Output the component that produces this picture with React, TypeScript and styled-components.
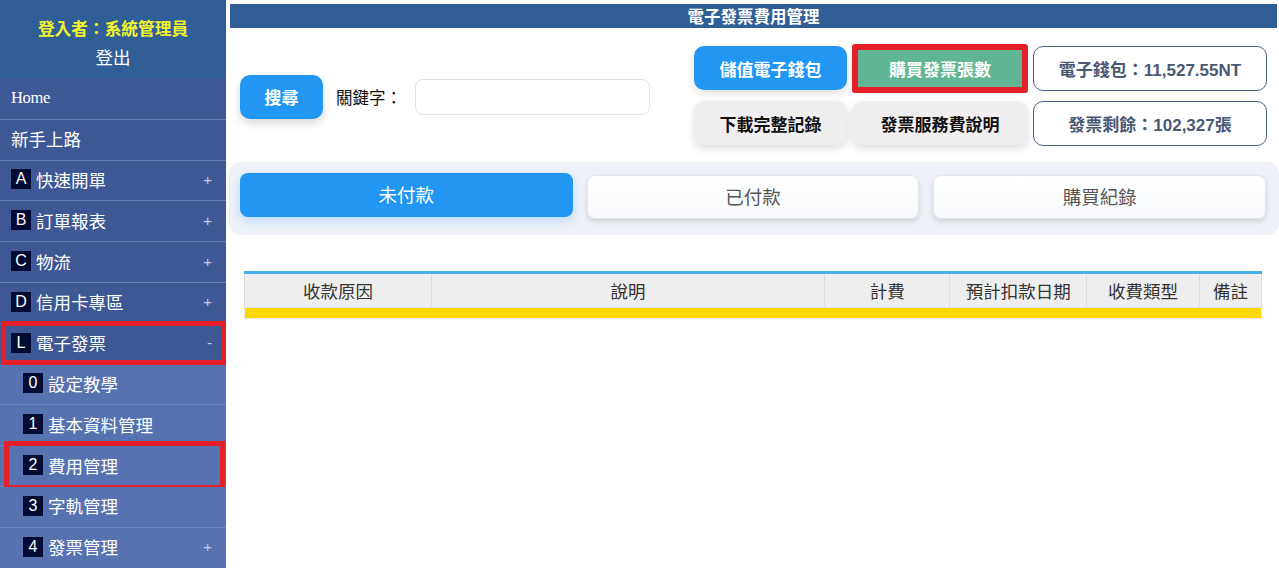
import React from "react";
import styled, { createGlobalStyle, css } from "styled-components";

const GlobalStyle = createGlobalStyle`
  html, body { margin: 0; padding: 0; background: #ffffff; }
  body { font-family: "Noto Sans CJK TC", "Noto Sans", sans-serif; overflow: hidden; }
  * { box-sizing: border-box; }
`;

const Page = styled.div`
  display: flex;
  width: 1279px;
  height: 568px;
  overflow: hidden;
`;

const Sidebar = styled.aside`
  width: 226px;
  flex: 0 0 226px;
  height: 568px;
  background: #3d5894;
  display: flex;
  flex-direction: column;
  font-family: "Liberation Serif", "Noto Sans CJK TC", serif;
  color: #ffffff;
  overflow: hidden;
`;

const UserBox = styled.div`
  height: 79px;
  flex: 0 0 79px;
  background: #305e97;
  display: flex;
  flex-direction: column;
  align-items: center;
  justify-content: center;
  gap: 10px;
  padding-top: 7px;
`;

const UserName = styled.div`
  color: #f2f52a;
  font-size: 16.7px;
  font-weight: bold;
  font-family: "Noto Sans CJK TC", sans-serif;
  line-height: 20px;
`;

const Logout = styled.div`
  color: #ffffff;
  font-size: 17.5px;
  line-height: 20px;
`;

const MenuItem = styled.div<{ $sub?: boolean; $marked?: boolean }>`
  position: relative;
  height: 40.8px;
  flex: 0 0 40.8px;
  display: flex;
  align-items: center;
  padding-left: ${(p) => (p.$sub ? "23px" : "11px")};
  padding-right: 14px;
  padding-bottom: 2px;
  font-size: 17.5px;
  background: ${(p) => (p.$sub ? "#5672b0" : "#3d5894")};
  border-bottom: 1px solid ${(p) => (p.$sub ? "#6c86c0" : "#6b7fb6")};
  ${(p) =>
    p.$marked &&
    css`
      &::after {
        content: "";
        position: absolute;
        left: ${p.$sub ? "4px" : "1px"};
        right: ${p.$sub ? "1px" : "-1px"};
        top: ${p.$sub ? "-5px" : "-3px"};
        bottom: ${p.$sub ? "-4px" : "-1px"};
        border: 5px solid #e51f27;
        pointer-events: none;
      }
    `}
`;

const Badge = styled.span`
  display: inline-flex;
  align-items: center;
  justify-content: center;
  width: 20px;
  height: 20px;
  margin-right: 5px;
  background: #020b33;
  color: #ffffff;
  font-family: "Liberation Sans", sans-serif;
  font-size: 16px;
`;

const MenuLabel = styled.span<{ $latin?: boolean }>`
  flex: 1;
  ${(p) =>
    p.$latin &&
    css`
      font-size: 16.5px;
      letter-spacing: -0.3px;
    `}
`;

const Toggle = styled.span`
  color: #c3cbe0;
  font-family: "Liberation Sans", sans-serif;
  font-size: 15px;
`;

const Main = styled.main`
  flex: 1;
  margin-left: 4px;
  padding-top: 4px;
  display: flex;
  flex-direction: column;
  min-width: 0;
`;

const TitleBar = styled.div`
  height: 24px;
  margin-right: 2px;
  background: #305e97;
  color: #ffffff;
  font-size: 16.5px;
  font-weight: bold;
  line-height: 24px;
  text-align: center;
`;

const Toolbar = styled.div`
  display: flex;
  align-items: center;
  justify-content: space-between;
  padding: 18px 12px 17px 10px;
`;

const SearchGroup = styled.div`
  display: flex;
  align-items: center;
  margin-top: 2px;
`;

const SearchButton = styled.button`
  width: 83px;
  height: 44px;
  border: none;
  border-radius: 10px;
  background: #2196f3;
  color: #ffffff;
  font-family: inherit;
  font-size: 17px;
  font-weight: bold;
  box-shadow: 0 4px 8px rgba(0, 0, 0, 0.16);
`;

const KeywordLabel = styled.label`
  margin-left: 13px;
  font-size: 16.5px;
  color: #111111;
  width: 79px;
`;

const KeywordInput = styled.input`
  width: 235px;
  height: 36px;
  border: 1px solid #e2e2e2;
  border-radius: 8px;
  background: #ffffff;
  outline: none;
`;

const ActionGrid = styled.div`
  display: grid;
  grid-template-columns: 153px 176px 234px;
  grid-template-rows: 44px 44px;
  column-gap: 5px;
  row-gap: 11px;
  align-items: center;
`;

const ActionButton = styled.button<{ $tone: "blue" | "green" | "gray" }>`
  height: 44px;
  border: none;
  border-radius: 10px;
  font-family: inherit;
  font-size: 17px;
  font-weight: bold;
  box-shadow: 0 4px 8px rgba(0, 0, 0, 0.12);
  ${(p) =>
    p.$tone === "blue" &&
    css`
      background: #2196f3;
      color: #ffffff;
    `}
  ${(p) =>
    p.$tone === "gray" &&
    css`
      background: #f0eeee;
      color: #111111;
    `}
  ${(p) =>
    p.$tone === "green" &&
    css`
      height: 49px;
      background: #5fb594;
      color: #ffffff;
      border: 6px solid #e51f27;
      border-radius: 3px;
      box-shadow: none;
    `}
`;

const InfoBox = styled.div`
  height: 45px;
  border: 1px solid #4c6286;
  border-radius: 10px;
  display: flex;
  align-items: center;
  justify-content: center;
  color: #4a5874;
  font-family: "Liberation Sans", "Noto Sans CJK TC", sans-serif;
  font-size: 17px;
  font-weight: bold;
`;

const TabBar = styled.div`
  display: grid;
  grid-template-columns: repeat(3, 1fr);
  gap: 14px;
  align-items: start;
  padding: 11px 13px 16px 11px;
  margin-left: -1px;
  background: #eef2f8;
  border-radius: 12px;
`;

const Tab = styled.div<{ $active?: boolean }>`
  height: 44px;
  display: flex;
  align-items: center;
  justify-content: center;
  border-radius: 8px;
  font-size: 18.5px;
  padding-bottom: 2px;
  ${(p) =>
    p.$active
      ? css`
          background: #2196f3;
          color: #ffffff;
          box-shadow: 0 4px 10px rgba(33, 150, 243, 0.25);
        `
      : css`
          margin-top: 2px;
          background: linear-gradient(#ffffff, #f7f9fc);
          color: #555555;
          border: 1px solid #e3e6eb;
          box-shadow: 0 3px 5px rgba(0, 0, 0, 0.12);
        `}
`;

const Table = styled.table`
  margin: 36px 0 0 14px;
  width: 1018px;
  border-collapse: collapse;
  border-top: 3px solid #4aaee6;
  font-size: 17.5px;
  color: #333333;
`;

const Th = styled.th<{ $w: number }>`
  width: ${(p) => p.$w}px;
  height: 35px;
  padding: 0;
  background: #eeeeee;
  font-weight: normal;
  text-align: center;
  border-left: 1px solid #dcdcdc;
  border-right: 1px solid #dcdcdc;
  border-bottom: 1px solid #e0e0e0;
`;

const FillRow = styled.td`
  height: 11px;
  padding: 0;
  background: #ffd700;
  border: 1px solid #e6e6e6;
  border-top: none;
`;

const menu: { badge?: string; label: string; toggle?: string; sub?: boolean; marked?: boolean }[] = [
  { label: "Home" },
  { label: "新手上路" },
  { badge: "A", label: "快速開單", toggle: "+" },
  { badge: "B", label: "訂單報表", toggle: "+" },
  { badge: "C", label: "物流", toggle: "+" },
  { badge: "D", label: "信用卡專區", toggle: "+" },
  { badge: "L", label: "電子發票", toggle: "-", marked: true },
  { badge: "0", label: "設定教學", sub: true },
  { badge: "1", label: "基本資料管理", sub: true },
  { badge: "2", label: "費用管理", sub: true, marked: true },
  { badge: "3", label: "字軌管理", sub: true },
  { badge: "4", label: "發票管理", sub: true, toggle: "+" },
];

const columns: [string, number][] = [
  ["收款原因", 187],
  ["說明", 394],
  ["計費", 125],
  ["預計扣款日期", 137],
  ["收費類型", 113],
  ["備註", 62],
];

export default function App() {
  return (
    <>
      <GlobalStyle />
      <Page>
        <Sidebar>
          <UserBox>
            <UserName>登入者：系統管理員</UserName>
            <Logout>登出</Logout>
          </UserBox>
          {menu.map((m) => (
            <MenuItem key={m.label} $sub={m.sub} $marked={m.marked}>
              {m.badge && <Badge>{m.badge}</Badge>}
              <MenuLabel $latin={m.label === "Home"}>{m.label}</MenuLabel>
              {m.toggle && <Toggle>{m.toggle}</Toggle>}
            </MenuItem>
          ))}
        </Sidebar>
        <Main>
          <TitleBar>電子發票費用管理</TitleBar>
          <Toolbar>
            <SearchGroup>
              <SearchButton>搜尋</SearchButton>
              <KeywordLabel>關鍵字：</KeywordLabel>
              <KeywordInput />
            </SearchGroup>
            <ActionGrid>
              <ActionButton $tone="blue">儲值電子錢包</ActionButton>
              <ActionButton $tone="green">購買發票張數</ActionButton>
              <InfoBox>電子錢包：11,527.55NT</InfoBox>
              <ActionButton $tone="gray">下載完整記錄</ActionButton>
              <ActionButton $tone="gray">發票服務費說明</ActionButton>
              <InfoBox>發票剩餘：102,327張</InfoBox>
            </ActionGrid>
          </Toolbar>
          <TabBar>
            <Tab $active>未付款</Tab>
            <Tab>已付款</Tab>
            <Tab>購買紀錄</Tab>
          </TabBar>
          <Table>
            <thead>
              <tr>
                {columns.map(([c, w]) => (
                  <Th key={c} $w={w}>
                    {c}
                  </Th>
                ))}
              </tr>
            </thead>
            <tbody>
              <tr>
                <FillRow colSpan={6} />
              </tr>
            </tbody>
          </Table>
        </Main>
      </Page>
    </>
  );
}
